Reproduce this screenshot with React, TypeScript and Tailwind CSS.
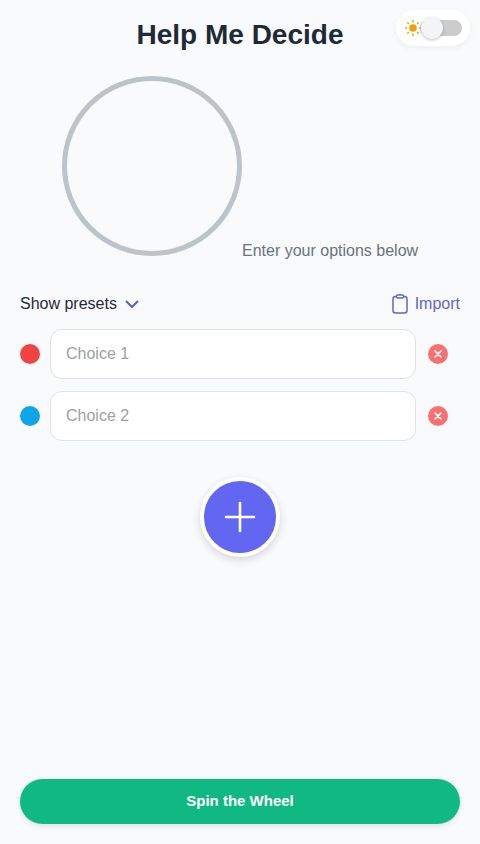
import React from "react";

function Sun() {
  return (
    <svg width="18" height="18" viewBox="0 0 18 18" fill="none" stroke="#f59e0b" strokeWidth="1.5" strokeLinecap="round">
      <circle cx="9" cy="9" r="3.8" fill="#f59e0b" stroke="none" />
      <path d="M9 1.5v1.2M9 15.3v1.2M1.5 9h1.2M15.3 9h1.2M3.7 3.7l.8.8M13.5 13.5l.8.8M3.7 14.3l.8-.8M13.5 4.5l.8-.8" />
    </svg>
  );
}

function Row({ color, placeholder }: { color: string; placeholder: string }) {
  return (
    <div className="flex items-center h-[50px]">
      <div className={`w-5 h-5 rounded-full shrink-0 ${color}`} />
      <input
        placeholder={placeholder}
        className="ml-2.5 w-[366px] h-[50px] rounded-xl border border-[#dfe1e4] bg-white px-[15px] text-base text-gray-800 placeholder:text-[#a0a0a0] outline-none"
      />
      <button className="ml-3 w-5 h-5 rounded-full bg-[#f87171] flex items-center justify-center">
        <svg width="8" height="8" viewBox="0 0 8 8" stroke="#fff" strokeWidth="1.7" strokeLinecap="round">
          <path d="M1 1l6 6M7 1L1 7" />
        </svg>
      </button>
    </div>
  );
}

export default function App() {
  return (
    <div className="relative w-[480px] h-[844px] bg-[#f9fafc] overflow-hidden flex flex-col font-['Liberation_Sans',Arial,sans-serif]">
      <div className="absolute top-2.5 right-2.5 w-[74px] h-9 rounded-[18px] bg-white shadow-[0_2px_6px_rgba(0,0,0,0.05)] flex items-center">
        <span className="ml-2 flex"><Sun /></span>
        <div className="absolute left-6 top-[10px] w-[42px] h-4 rounded-lg bg-[#cccccc]" />
        <div className="absolute left-[25px] top-[7px] w-[22px] h-[22px] rounded-full bg-[#f3f4f6] shadow-[0_1px_3px_rgba(0,0,0,0.25)]" />
      </div>

      <h1 className="mt-[18px] text-center text-[28px] leading-[34px] font-bold text-[#1f2937]">Help Me Decide</h1>

      <div className="mt-[24px] ml-[62px] h-[180px] flex items-end">
        <div className="w-[180px] h-[180px] rounded-full border-[5px] border-[#bcc4c9] shrink-0" />
        <span className="text-base leading-[18px] -mb-1 text-[#6b7280]">Enter your options below</span>
      </div>

      <div className="mt-[37px] px-5 flex items-center justify-between h-[22px]">
        <button className="flex items-center text-base text-[#1f2937]">
          Show presets
          <svg className="ml-2" width="14" height="9" viewBox="0 0 14 9" fill="none" stroke="#5b5fc7" strokeWidth="2" strokeLinecap="round" strokeLinejoin="round">
            <path d="M1.5 1.5L7 7l5.5-5.5" />
          </svg>
        </button>
        <button className="flex items-center text-base text-[#6366c9]">
          <svg className="mr-[7px]" width="16" height="20" viewBox="0 0 16 20" fill="none" stroke="#6366c9" strokeWidth="1.5" strokeLinejoin="round">
            <rect x="1" y="2.5" width="14" height="16.5" rx="2.5" />
            <rect x="4.5" y="1" width="7" height="3" rx="1.3" fill="#f9fafc" />
          </svg>
          Import
        </button>
      </div>

      <div className="mt-[14px] px-5 flex flex-col gap-3">
        <Row color="bg-[#ef4444]" placeholder="Choice 1" />
        <Row color="bg-[#0ea5e9]" placeholder="Choice 2" />
      </div>

      <div className="mt-9 flex justify-center">
        <button className="w-20 h-20 rounded-full bg-[#6366f1] border-4 border-white shadow-[0_3px_8px_rgba(0,0,0,0.15)] flex items-center justify-center">
          <svg width="32" height="32" viewBox="0 0 32 32" stroke="#fff" strokeWidth="2.6" strokeLinecap="round">
            <path d="M16 2v28M2 16h28" />
          </svg>
        </button>
      </div>

      <div className="mt-auto mb-5 px-5">
        <button className="w-full h-[45px] rounded-[23px] bg-[#10b981] text-white font-bold text-[15px] shadow-[0_2px_6px_rgba(0,0,0,0.1)]">
          Spin the Wheel
        </button>
      </div>
    </div>
  );
}
